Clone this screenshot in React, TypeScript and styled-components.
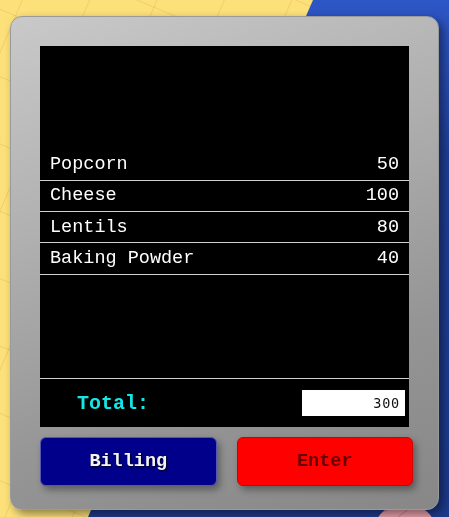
import React from "react";
import styled, { createGlobalStyle } from "styled-components";

const Global = createGlobalStyle`
  html, body { margin: 0; padding: 0; }
  body {
    width: 449px;
    height: 517px;
    overflow: hidden;
    font-family: "Liberation Mono", "Courier New", monospace;
    background: #fce17a;
  }
`;

const Backdrop = styled.svg`
  position: fixed;
  left: 0;
  top: 0;
  width: 449px;
  height: 517px;
  z-index: 0;
`;

const Page = styled.div`
  position: relative;
  z-index: 1;
  padding: 16px 10px 0 10px;
`;

const Card = styled.div`
  box-sizing: border-box;
  width: 429px;
  height: 494px;
  padding: 29px 25px 23px 29px;
  border-radius: 12px;
  border: 1px solid #9a9a9a;
  background: linear-gradient(160deg, #c9c9c9 0%, #b0b0b0 35%, #959595 70%, #878787 100%);
  box-shadow: 4px 4px 10px rgba(0, 0, 0, 0.45);
  display: flex;
  flex-direction: column;
  gap: 10px;
`;

const Screen = styled.div`
  width: 369px;
  height: 381px;
  background: #000;
  display: flex;
  flex-direction: column;
`;

const ListArea = styled.div`
  flex: 1;
  display: flex;
  flex-direction: column;
  justify-content: center;
`;

const Row = styled.div`
  box-sizing: border-box;
  height: 31.4px;
  padding: 0 10px;
  display: flex;
  align-items: center;
  justify-content: space-between;
  border-bottom: 1px solid #d0d0d0;
  color: #fff;
  font-size: 18.5px;
`;

const TotalRow = styled.div`
  box-sizing: border-box;
  height: 49px;
  border-top: 1px solid #d0d0d0;
  display: flex;
  align-items: center;
  justify-content: space-between;
  padding: 0 4px 0 37px;
`;

const TotalLabel = styled.span`
  color: #14e6e6;
  font-weight: bold;
  font-size: 20px;
`;

const TotalBox = styled.div`
  box-sizing: border-box;
  width: 103px;
  height: 26px;
  background: #fff;
  color: #111;
  font-family: "DejaVu Sans Mono", monospace;
  font-size: 13.5px;
  letter-spacing: 0.8px;
  display: flex;
  align-items: center;
  justify-content: flex-end;
  padding-right: 5px;
  margin-bottom: 1px;
`;

const Buttons = styled.div`
  width: 373px;
  display: flex;
  gap: 20px;
`;

const Button = styled.button<{ $variant: "blue" | "red" }>`
  flex: 1;
  height: 49px;
  border-radius: 6px;
  font-family: "Liberation Mono", "Courier New", monospace;
  font-weight: bold;
  font-size: 18.5px;
  cursor: pointer;
  box-shadow: 3px 4px 7px rgba(0, 0, 0, 0.35);
  background: ${(p) => (p.$variant === "blue" ? "#00008a" : "#ff0000")};
  border: 1px solid ${(p) => (p.$variant === "blue" ? "#5656b4" : "#d40000")};
  color: ${(p) => (p.$variant === "blue" ? "#f4f4f4" : "#660000")};
  text-shadow: ${(p) => (p.$variant === "blue" ? "1px 1px 2px rgba(0,0,0,0.9)" : "none")};
`;

const items = [
  { name: "Popcorn", price: 50 },
  { name: "Cheese", price: 100 },
  { name: "Lentils", price: 80 },
  { name: "Baking Powder", price: 40 },
];

export default function App() {
  return (
    <>
      <Global />
      <Backdrop viewBox="0 0 449 517">
        <defs>
          <pattern id="grid" width="62" height="62" patternUnits="userSpaceOnUse" patternTransform="rotate(23) translate(20 8)">
            <path d="M0 0 H62 M0 0 V62" stroke="#e2ae48" strokeWidth="1" fill="none" opacity="0.7" />
          </pattern>
          <linearGradient id="blue" x1="0" y1="0" x2="0" y2="1">
            <stop offset="0" stopColor="#2d56c6" />
            <stop offset="0.3" stopColor="#1f3f98" />
            <stop offset="1" stopColor="#1d3a8c" />
          </linearGradient>
        </defs>
        <rect width="449" height="517" fill="#fce17a" />
        <rect width="449" height="517" fill="url(#grid)" />
        <polygon points="313,0 449,0 449,517 88,517" fill="url(#blue)" />
        <ellipse cx="405" cy="528" rx="30" ry="24" fill="#e8a0aa" />
        <path d="M385 512 L400 500 M398 517 L418 502" stroke="#d07a88" strokeWidth="1" />
      </Backdrop>
      <Page>
        <Card>
          <Screen>
            <ListArea>
              {items.map((it) => (
                <Row key={it.name}>
                  <span>{it.name}</span>
                  <span>{it.price}</span>
                </Row>
              ))}
            </ListArea>
            <TotalRow>
              <TotalLabel>Total:</TotalLabel>
              <TotalBox>300</TotalBox>
            </TotalRow>
          </Screen>
          <Buttons>
            <Button $variant="blue">Billing</Button>
            <Button $variant="red">Enter</Button>
          </Buttons>
        </Card>
      </Page>
    </>
  );
}
